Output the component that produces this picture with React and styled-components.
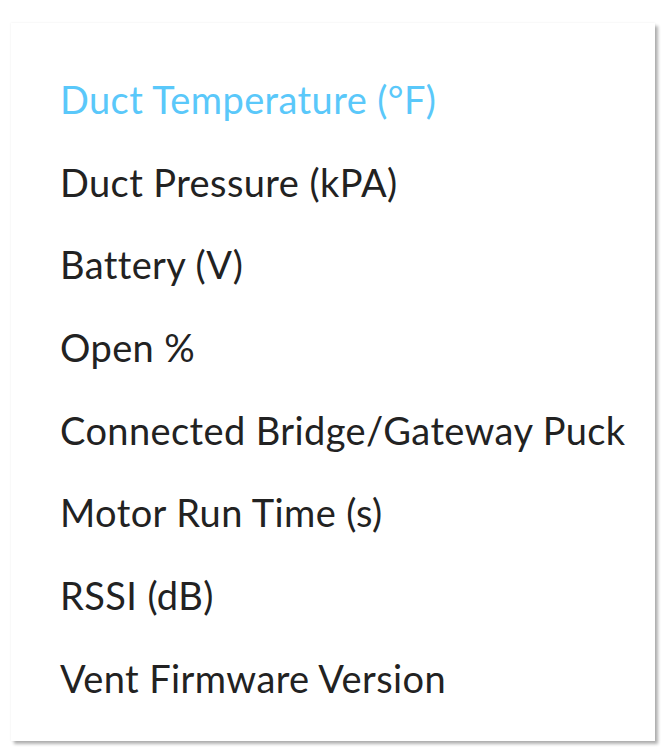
import React from "react";
import styled, { createGlobalStyle } from "styled-components";

const GlobalStyle = createGlobalStyle`
  body {
    margin: 0;
    background: #ffffff;
    font-family: Lato, "Noto Sans", sans-serif;
  }
`;

const Page = styled.div`
  padding: 23px 11px 11px 11px;
`;

const Menu = styled.ul`
  list-style: none;
  margin: 0;
  width: 644px;
  height: 718px;
  box-sizing: border-box;
  padding: 35px 0 0 49px;
  background: #ffffff;
  box-shadow: 3px 3px 3px rgba(0, 0, 0, 0.3), 0 0 2px rgba(0, 0, 0, 0.08);
`;

const Item = styled.li`
  font-size: 38px;
  letter-spacing: 0.4px;
  line-height: 82.7px;
  height: 82.7px;
  color: ${(p) => (p.$active ? "#5ac8fa" : "#222222")};
  white-space: nowrap;
`;

const items = [
  "Duct Temperature (°F)",
  "Duct Pressure (kPA)",
  "Battery (V)",
  "Open %",
  "Connected Bridge/Gateway Puck",
  "Motor Run Time (s)",
  "RSSI (dB)",
  "Vent Firmware Version",
];

const App = () => {
  return (
    <Page>
      <GlobalStyle />
      <Menu>
        {items.map((label, i) => (
          <Item key={label} $active={i === 0}>
            {label}
          </Item>
        ))}
      </Menu>
    </Page>
  );
};

export default App;
